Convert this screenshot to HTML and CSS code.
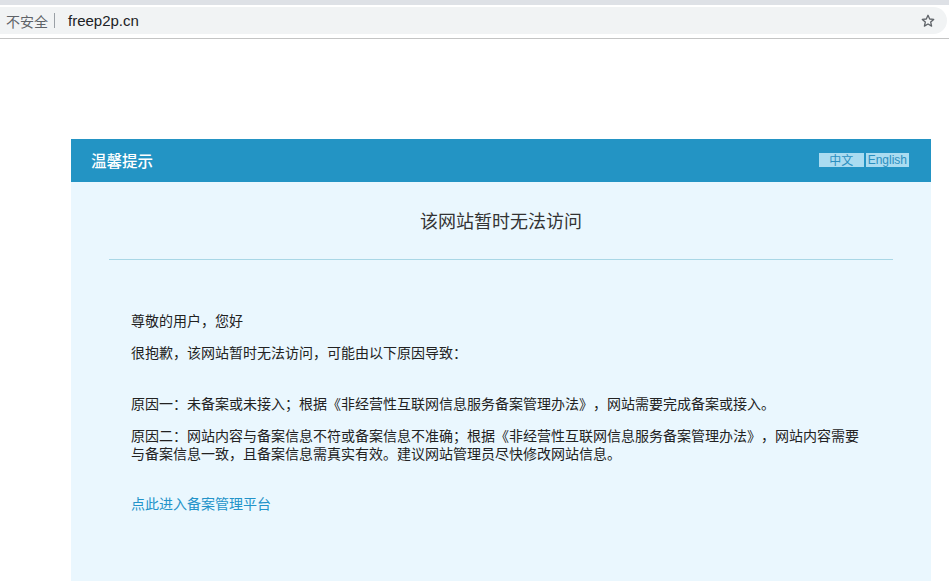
FILE: index.html
```html
<!DOCTYPE html>
<html lang="zh-CN">
<head>
    <meta charset="UTF-8">
    <title>温馨提示</title>
    <link rel="stylesheet" href="styles.css">
</head>
<body>
<div class="chrome">
    <div class="tabstrip"></div>
    <div class="toolbar">
        <div class="omnibox">
            <span class="insecure">不安全</span>
            <span class="sep"></span>
            <span class="url">freep2p.cn</span>
            <svg class="star" width="14" height="14" viewBox="0 0 14 14">
                <path d="M7 1.3 L8.7 5 L12.7 5.4 L9.7 8.1 L10.6 12.1 L7 10 L3.4 12.1 L4.3 8.1 L1.3 5.4 L5.3 5 Z" fill="none" stroke="#5f6368" stroke-width="1.3" stroke-linejoin="round"/>
            </svg>
        </div>
    </div>
</div>
<div class="page">
    <div class="card">
        <div class="card-head">
            <span class="card-title">温馨提示</span>
            <div class="lang">
                <a href="javascript:;" class="lang-cn">中文</a>
                <a href="javascript:;" class="lang-en">English</a>
            </div>
        </div>
        <div class="card-body">
            <h1 class="notice">该网站暂时无法访问</h1>
            <div class="divider"></div>
            <div class="content">
                <p>尊敬的用户，您好</p>
                <p>很抱歉，该网站暂时无法访问，可能由以下原因导致：</p>
                <p class="gap">原因一：未备案或未接入；根据《非经营性互联网信息服务备案管理办法》，网站需要完成备案或接入。</p>
                <p>原因二：网站内容与备案信息不符或备案信息不准确；根据《非经营性互联网信息服务备案管理办法》，网站内容需要与备案信息一致，且备案信息需真实有效。建议网站管理员尽快修改网站信息。</p>
                <a href="javascript:;" class="link">点此进入备案管理平台</a>
            </div>
        </div>
    </div>
</div>
</body>
</html>
```

FILE: styles.css
```css
html,body,h1,p{
    margin: 0;
    padding: 0;
}
body{
    font-family: "Noto Sans CJK SC", "Liberation Sans", sans-serif;
    background: #fff;
    overflow: hidden;
    text-spacing-trim: space-all;
}
.chrome{
    height: 39px;
}
.tabstrip{
    height: 5px;
    background: #dee1e6;
}
.toolbar{
    height: 34px;
    padding: 2px 2px 0 0;
    border-bottom: 1px solid #c4c4c4;
    box-sizing: border-box;
}
.omnibox{
    display: flex;
    align-items: center;
    height: 27px;
    background: #f1f3f4;
    border-radius: 0 14px 14px 0;
    padding: 0 8px 0 6px;
}
.insecure{
    font-size: 14px;
    color: #5f6368;
}
.sep{
    width: 1px;
    height: 15px;
    background: #9aa0a6;
    margin: 0 13px 0 6px;
}
.url{
    font-family: "Liberation Sans", sans-serif;
    font-size: 15px;
    color: #202124;
    flex: 1;
}
.star{
    margin-right: 4px;
}
.page{
    padding: 100px 18px 0 71px;
}
.card{
    width: 860px;
}
.card-head{
    display: flex;
    align-items: center;
    justify-content: space-between;
    height: 43px;
    padding: 0 22px 0 20px;
    background: #2394c4;
}
.card-title{
    font-size: 15.5px;
    color: #fff;
    font-weight: 500;
    margin-top: -2px;
}
.lang{
    display: flex;
    gap: 2px;
    font-size: 12px;
    line-height: 14px;
    margin-top: -2px;
}
.lang a{
    display: block;
    height: 14px;
    background: #aadcf1;
    color: #2a8fc0;
    text-decoration: none;
}
.lang-cn{
    width: 45px;
    text-align: center;
}
.lang-en{
    padding: 0 2px;
    font-family: "Liberation Sans", sans-serif;
}
.card-body{
    background: #eaf7fe;
    height: 399px;
    box-sizing: border-box;
    padding-top: 26px;
}
.notice{
    font-size: 18px;
    font-weight: normal;
    line-height: 24px;
    color: #333;
    text-align: center;
}
.divider{
    height: 1px;
    margin: 27px 38px 0;
    background: #a9d7e6;
}
.content{
    padding: 51px 0 0 60px;
    width: 735px;
    font-size: 14px;
    line-height: 18px;
    color: #222;
}
.content p{
    margin-bottom: 14px;
}
.content .gap{
    margin-top: 33px;
}
.link{
    display: inline-block;
    margin-top: 18px;
    color: #2393c9;
    text-decoration: none;
}
```
